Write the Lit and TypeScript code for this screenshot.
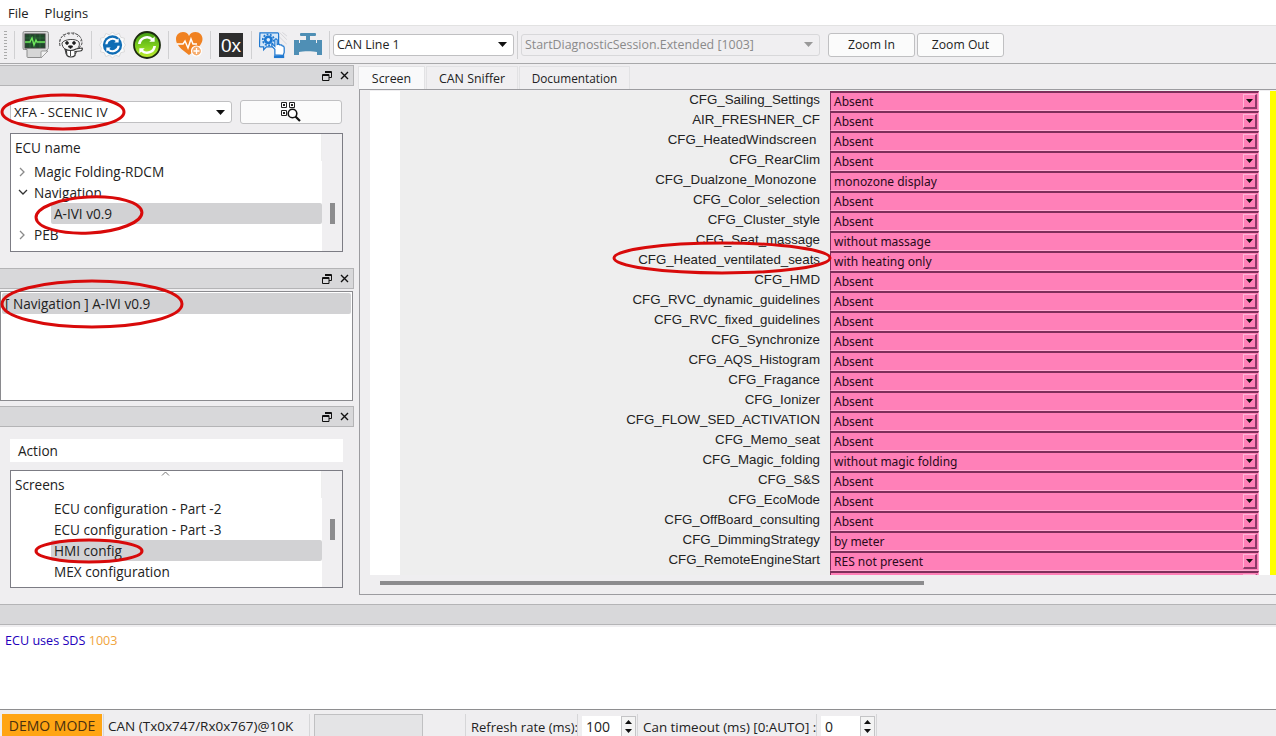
import { LitElement, html, css, svg } from 'lit';
import { customElement } from 'lit/decorators.js';

const rows: [string, string][] = [
  ['CFG_Sailing_Settings', 'Absent'],
  ['AIR_FRESHNER_CF', 'Absent'],
  ['CFG_HeatedWindscreen ', 'Absent'],
  ['CFG_RearClim', 'Absent'],
  ['CFG_Dualzone_Monozone ', 'monozone display'],
  ['CFG_Color_selection', 'Absent'],
  ['CFG_Cluster_style', 'Absent'],
  ['CFG_Seat_massage', 'without massage'],
  ['CFG_Heated_ventilated_seats', 'with heating only'],
  ['CFG_HMD', 'Absent'],
  ['CFG_RVC_dynamic_guidelines', 'Absent'],
  ['CFG_RVC_fixed_guidelines', 'Absent'],
  ['CFG_Synchronize', 'Absent'],
  ['CFG_AQS_Histogram', 'Absent'],
  ['CFG_Fragance', 'Absent'],
  ['CFG_Ionizer', 'Absent'],
  ['CFG_FLOW_SED_ACTIVATION', 'Absent'],
  ['CFG_Memo_seat', 'Absent'],
  ['CFG_Magic_folding', 'without magic folding'],
  ['CFG_S&S', 'Absent'],
  ['CFG_EcoMode', 'Absent'],
  ['CFG_OffBoard_consulting', 'Absent'],
  ['CFG_DimmingStrategy', 'by meter'],
  ['CFG_RemoteEngineStart', 'RES not present'],
  ['', ''],
];

const floatIcon = html`<svg width="10" height="10" viewBox="0 0 10 10"><path d="M3 .5h6.5v6H7M.5 3.5h6.5v6H.5zM.5 4.500h6.500M3 1.500h6.500" fill="none" stroke="#111"/></svg>`;
const closeIcon = html`<svg width="9" height="9" viewBox="0 0 9 9"><path d="M1 1l7 7M8 1l-7 7" stroke="#111" stroke-width="1.4"/></svg>`;
const arrow = html`<svg width="9" height="5" viewBox="0 0 9 5"><path d="M0 0h9L4.5 5z" fill="#111"/></svg>`;
const pinkArrow = html`<svg width="7" height="4" viewBox="0 0 7 4"><path d="M0 0h7L3.5 4z" fill="#111"/></svg>`;
const spinUp = html`<svg width="7" height="4" viewBox="0 0 7 4"><path d="M0 4h7L3.5 0z" fill="#111"/></svg>`;
const spinDown = html`<svg width="7" height="4" viewBox="0 0 7 4"><path d="M0 0h7L3.5 4z" fill="#111"/></svg>`;
const chevRight = html`<svg class="chev" width="7" height="10" viewBox="0 0 7 10"><path d="M1 1l4 4-4 4" fill="none" stroke="#8a8a8a" stroke-width="1.3"/></svg>`;
const chevDown = html`<svg class="chev" width="10" height="7" viewBox="0 0 10 7"><path d="M1 1l4 4 4-4" fill="none" stroke="#333" stroke-width="1.3"/></svg>`;

const syncArrows = svg`<path d="M7 13a7 7 0 0 1 11.500-4.500l-2 2h6v-6l-2 2A10 10 0 0 0 4 13z M21 15a7 7 0 0 1-11.500 4.500l2-2h-6v6l2-2A10 10 0 0 0 24 15z" fill="#fff"/>`;

const icons = {
  monitor: html`<svg width="28" height="28" viewBox="0 0 28 28">
    <path d="M1 2q0-1.500 1.500-1.500h22q2 0 2 2v14q0 1-1 2l-7 8H6q-1 0-1-1v-7H2.500Q1 19 1 17z" fill="#d6d6d6" stroke="#8c8c8c"/>
    <path d="M19 27v-6q0-1 1-1h6z" fill="#f2f2f2" stroke="#8c8c8c" stroke-width=".8"/>
    <rect x="3" y="3" width="20" height="14" fill="#1f4a2a" stroke="#3c3c3c"/>
    <path d="M3 7h20M3 12h20M8 3v14M13 3v14M18 3v14" stroke="#3b7a4a" stroke-width=".5"/>
    <path d="M3 11h5l2-4 2 7 2-5 1 2h8" fill="none" stroke="#6fe85c" stroke-width="1.4"/>
  </svg>`,
  beaver: html`<svg width="27" height="28" viewBox="0 0 27 28" fill="none" stroke="#333" stroke-width=".9">
    <path d="M3 15C1 7 7 2 14 2s11 4 11 10c0 2-2 3-3 5" stroke-dasharray="3 1"/>
    <path d="M6 3l2 3M11 1l1 3M17 1l-1 3M22 4l-2 2M25 9l-2 1M2 9l2 1" stroke="#777"/>
    <path d="M5 12c2-4 14-5 17-1 1 3 0 5-2 7l-1 4c-2 4-8 5-10 1l-1-5c-2-1-3-4-3-6z" fill="#f4f4f4"/>
    <circle cx="10" cy="12" r="1.400" fill="#111"/><circle cx="17" cy="12" r="1.400" fill="#111"/>
    <path d="M11 15.500c1-1 4-1 5 0l-2.500 2z" fill="#111"/>
    <path d="M8 18c3 2 8 2 11 0l6-1c1 1 0 3-2 3l-5 .5v4c-2 2-6 2-8 0l-.5-4z" fill="#fff" stroke-width="1.100"/>
    <path d="M13.500 19v6"/>
  </svg>`,
  blueSync: html`<svg width="27" height="28" viewBox="0 0 28 28">
    <path d="M14 .5l3 3 4-1.500 1.500 4 4 1-1 4 2 3-2 3 1 4-4 1-1.500 4-4-1.500-3 3-3-3-4 1.500-1.500-4-4-1 1-4-2-3 2-3-1-4 4-1L7 2l4 1.500z" fill="#fbfbfb" stroke="#d8d8d8"/>
    <circle cx="14" cy="14" r="10" fill="#0f6db5"/>
    <g transform="translate(3.500 3.500) scale(.75)">${syncArrows}</g>
  </svg>`,
  greenSync: html`<svg width="28" height="28" viewBox="0 0 28 28">
    <defs><linearGradient id="gr" x1="0" y1="0" x2="0" y2="1"><stop offset="0" stop-color="#3f9a14"/><stop offset=".55" stop-color="#7fcf1e"/><stop offset="1" stop-color="#c4ee32"/></linearGradient></defs>
    <circle cx="14" cy="14" r="13" fill="url(#gr)" stroke="#1c2a10" stroke-width="1.800"/>
    <g transform="translate(1.400 1.400) scale(.9)">${syncArrows}</g>
  </svg>`,
  heart: html`<svg width="27" height="28" viewBox="0 0 27 28">
    <path d="M13 24C5 18 0 14 0 8c0-4 3-7 7-7 3 0 5 1.500 6 4 1-2.500 3.500-4 6.500-4 4 0 7 3 7 7 0 5-5 10-13.500 16z" fill="#f08222"/>
    <path d="M1 13h6l2-3 3 7 3-9 2 5h4" fill="none" stroke="#fff" stroke-width="1.500"/>
    <circle cx="20.500" cy="20" r="5" fill="#f5ab6c" stroke="#fff" stroke-width="1.200"/>
    <path d="M20.500 17v6M17.500 20h6" stroke="#fff" stroke-width="1.300"/>
  </svg>`,
  gearHand: html`<svg width="28" height="28" viewBox="0 0 30 29">
    <path d="M17 1L30 14M22 1l8 8M12 14l9-9M25 1l5 4" stroke="#d4d4d8" stroke-width="1"/>
    <path d="M1 1.500h19q1 0 1 1v13q0 1-1 1H8l-3 3v-3H1.500q-1 0-1-1z" fill="#d5e7f8" stroke="#1f78d0" stroke-width="1.300"/>
    <circle cx="10" cy="9" r="4.800" fill="#1f78d0"/>
    <circle cx="10" cy="9" r="5.900" fill="none" stroke="#1f78d0" stroke-width="1.900" stroke-dasharray="2 1.600"/>
    <circle cx="10" cy="9" r="1.900" fill="#e4f0fb"/>
    <path d="M17 25v-6l-3-3q-1-2 1-2l2 2V9q1-2 2.500 0v5q2-1 3 .5 2-.5 2.500 1 2 0 2 2v5l-1 3z" fill="#fff" stroke="#1f78d0" stroke-width="1.300"/>
    <rect x="16" y="25.500" width="11" height="3" fill="#1f78d0"/>
  </svg>`,
  valve: html`<svg width="28" height="23" viewBox="0 0 28 23" fill="#4f8fb5">
    <rect x="6" y="0" width="16" height="3" rx="1"/>
    <rect x="12" y="2" width="4" height="6"/>
    <path d="M6 7h16v3h1V7h5v15h-5v-3c-4-1-14-1-18 0v3H0V7h5v3h1z"/>
  </svg>`,
  qr: html`<svg width="20" height="20" viewBox="0 0 20 20">
    <path d="M.5.500h5v5h-5zM8.500.500h5v5h-5zM.5 8.500h5v5h-5z" fill="none" stroke="#222"/>
    <path d="M2 2h2v2H2zM10 2h2v2h-2zM2 10h2v2H2z" fill="#222"/>
    <circle cx="11.500" cy="11.500" r="4.300" fill="#fff" stroke="#111" stroke-width="1.600"/>
    <path d="M14.500 14.500l4.500 4.500" stroke="#111" stroke-width="2.200"/>
  </svg>`,
};

const spin = (value: string) =>
  html`<div class="spin"><span>${value}</span><div class="spin-btns"><i>${spinUp}</i><i>${spinDown}</i></div></div>`;

@customElement('app-root')
export class AppRoot extends LitElement {
  static styles = css`
    :host {
      display: block;
      position: relative;
      width: 1276px;
      height: 736px;
      overflow: hidden;
      background: #efeef0;
      color: #222;
      font: 13px 'Open Sans', 'Noto Sans', sans-serif;
    }

    .menubar {
      display: flex;
      gap: 16px;
      height: 25px;
      padding-left: 8px;
      align-items: center;
      background: #fff;
      border-bottom: 1px solid #e2e2e2;
    }

    .toolbar {
      display: flex;
      align-items: center;
      gap: 7px;
      height: 38px;
      padding-left: 4px;
      box-sizing: border-box;
      background: #f0eff1;
      border-bottom: 1px solid #a8a8aa;
    }

    .grip {
      width: 3px;
      height: 28px;
      background: repeating-linear-gradient(#aaa 0 1px, transparent 1px 3px);
    }

    .sep {
      width: 1px;
      height: 28px;
      background: #d0d0d2;
    }

    .tb-icon {
      display: flex;
    }

    .hex {
      width: 24px;
      height: 24px;
      margin: 0 1px;
      background: #2e2e2e;
      color: #fff;
      display: flex;
      align-items: flex-end;
      justify-content: center;
      font: 19px/22px 'Liberation Sans', sans-serif;
    }

    .tb-combos {
      display: flex;
      align-items: center;
      gap: 3px;
      margin-left: -4px;
      font-size: 12.4px;
    }

    .combo {
      display: flex;
      align-items: center;
      justify-content: space-between;
      box-sizing: border-box;
      height: 22px;
      padding: 0 6px 0 3px;
      background: #fff;
      border: 1px solid #c0c0c2;
      border-radius: 3px;
      white-space: nowrap;
    }

    .combo.can {
      width: 181px;
    }

    .combo.session {
      width: 299px;
      background: #f0eff1;
      color: #8a8a8a;
      border-color: #d8d8da;
    }

    .btn {
      box-sizing: border-box;
      display: flex;
      align-items: center;
      justify-content: center;
      background: #fbfbfb;
      border: 1px solid #c0c0c2;
      border-radius: 3px;
    }

    .zooms {
      display: flex;
      gap: 2px;
      margin-left: 1px;
      font-size: 12.2px;
    }

    .zooms .btn {
      width: 87px;
      height: 24px;
    }

    .main {
      display: flex;
      height: 540px;
    }

    .left {
      width: 359px;
      flex: none;
      box-sizing: border-box;
      padding-top: 1px;
      font-size: 13.6px;
    }

    .dock-title {
      display: flex;
      align-items: center;
      justify-content: flex-end;
      gap: 8px;
      box-sizing: border-box;
      width: 354px;
      height: 21px;
      padding-right: 4px;
      background: #d8d8da;
      border: 1px solid #b4b4b6;
      border-left: 0;
    }

    .dock-title.second {
      margin-top: 16px;
    }

    .dock-title.full {
      width: 100%;
      border-right: 0;
    }

    .picker {
      display: flex;
      align-items: center;
      gap: 8px;
      padding: 14px 0 0 10px;
      font-size: 13.2px;
    }

    .picker .combo {
      width: 222px;
    }

    .picker .btn {
      width: 102px;
      height: 24px;
    }

    .tree {
      display: flex;
      box-sizing: border-box;
      width: 333px;
      margin-left: 10px;
      background: #fff;
      border: 1px solid #7c7c84;
      overflow: hidden;
      position: relative;
    }

    .tree.ecu {
      height: 119px;
      margin-top: 9px;
    }

    .tree.screens {
      height: 118px;
      margin-top: 8px;
    }

    .tree-body {
      width: 311px;
      flex: none;
    }

    .tree-head {
      display: flex;
      align-items: center;
      height: 27px;
      padding-left: 4px;
      border-right: 1px solid #eee;
    }

    .row {
      display: flex;
      align-items: center;
      height: 21px;
      white-space: nowrap;
    }

    .row .twist {
      width: 23px;
      flex: none;
      display: flex;
      justify-content: center;
    }

    .row.child {
      margin-left: 40px;
      padding-left: 3px;
    }

    .row.sel {
      background: #d2d2d4;
      border-radius: 2px;
    }

    .tree-bar {
      flex: 1;
      background: #f0eff1;
    }

    .thumb {
      width: 5px;
      height: 21px;
      margin-left: 8px;
      background: #8c8c8e;
    }

    .ecu .thumb {
      margin-top: 69px;
    }

    .screens .thumb {
      margin-top: 48px;
    }

    .up-chev {
      position: absolute;
      left: 150px;
      top: 0;
    }

    .log-list {
      box-sizing: border-box;
      width: 353px;
      height: 110px;
      margin-top: 2px;
      margin-bottom: 5px;
      padding: 1px;
      background: #fff;
      border: 1px solid #8a8a8e;
    }

    .log-list div {
      height: 21px;
      line-height: 21px;
      padding-left: 3px;
      background: #d2d2d4;
      border-radius: 2px;
    }

    .action {
      display: flex;
      align-items: center;
      box-sizing: border-box;
      width: 333px;
      height: 23px;
      margin: 12px 0 0 10px;
      padding-left: 8px;
      background: #fff;
    }

    .right {
      flex: 1;
      min-width: 0;
      padding-top: 2px;
    }

    .tabs {
      display: flex;
      height: 23px;
      margin-left: -1px;
      font-size: 12.4px;
    }

    .tab {
      display: flex;
      align-items: center;
      justify-content: center;
      box-sizing: border-box;
      background: #f0eff1;
      border: 1px solid #e2e2e4;
      border-bottom: 0;
      margin-right: 1px;
    }

    .tab.on {
      width: 67px;
      background: #f9f9fa;
    }

    .tab.sniffer {
      width: 92px;
    }

    .tab.docs {
      width: 111px;
      font-size: 11.8px;
    }

    .frame {
      height: 506px;
      box-sizing: border-box;
      border-top: 1px solid #9c9ca0;
      border-left: 1px solid #9c9ca0;
      border-bottom: 1px solid #9c9ca0;
      padding-left: 10px;
    }

    .canvas {
      display: flex;
      height: 484px;
      margin-top: 1px;
      overflow: hidden;
    }

    .gutter {
      width: 30px;
      flex: none;
      background: #fff;
    }

    .form {
      width: 859px;
      flex: none;
      background: #eeeeee;
    }

    .form-row {
      display: flex;
      height: 20px;
    }

    .form-row label {
      width: 430px;
      flex: none;
      padding: 1px 10px 0 0;
      box-sizing: border-box;
      text-align: right;
      white-space: pre;
      font: 13.3px/16px 'Liberation Sans', sans-serif;
      color: #222;
    }

    .pink {
      display: flex;
      align-items: center;
      justify-content: space-between;
      box-sizing: border-box;
      width: 429px;
      height: 20px;
      padding-left: 3px;
      background: #ff80b8;
      border-style: solid;
      border-width: 2px 1px 1px 1px;
      border-color: #7d2f5a #ffa8d0 #ffa8d0 #7d2f5a;
      font: 12px 'Noto Sans', sans-serif;
      color: #2a0a1a;
    }

    .drop {
      display: flex;
      align-items: center;
      justify-content: center;
      box-sizing: border-box;
      width: 14px;
      height: 15px;
      margin-right: 1px;
      border-style: solid;
      border-width: 1px 2px 2px 1px;
      border-color: #ffb4d6 #8d3a68 #8d3a68 #ffb4d6;
    }

    .margin-white {
      width: 11px;
      flex: none;
      background: #fff;
    }

    .yellow {
      flex: 1;
      background: #ffff00;
    }

    .hscroll {
      width: 544px;
      height: 4px;
      margin: 6px 0 0 10px;
      background: #8c8c8e;
    }

    .log {
      box-sizing: border-box;
      height: 82px;
      margin-top: 2px;
      padding: 5px 5px;
      background: #fff;
      font-size: 12.6px;
      color: #2200bb;
    }

    .log b {
      font-weight: 400;
      color: #f0a43c;
    }

    .status {
      display: flex;
      align-items: flex-end;
      height: 28px;
      box-sizing: border-box;
      border-top: 1px solid #8e8e90;
      padding-left: 2px;
    }

    .demo {
      display: flex;
      align-items: center;
      justify-content: center;
      width: 100px;
      height: 23px;
      background: #ffa514;
      color: #4a3010;
      font-size: 14px;
    }

    .cell {
      display: flex;
      align-items: center;
      height: 23px;
      box-sizing: border-box;
      border-left: 1px solid #d6d6d8;
      padding-left: 5px;
      white-space: nowrap;
    }

    .cell.can {
      width: 206px;
      margin-left: 1px;
      padding-left: 4px;
      font-size: 13.5px;
    }

    .cell.blank {
      width: 156px;
      padding-left: 4px;
    }

    .blank div {
      width: 109px;
      height: 23px;
      box-sizing: border-box;
      background: #e4e4e6;
      border: 1px solid #c0c0c2;
      border-bottom: 0;
    }

    .cell.rate {
      width: 112px;
      padding-top: 2px;
    }

    .cell.value {
      width: 60px;
      padding-left: 4px;
    }

    .cell.timeout {
      width: 179px;
      padding-top: 2px;
      font-size: 13.4px;
    }

    .spin {
      display: flex;
      align-items: center;
      box-sizing: border-box;
      width: 54px;
      height: 21px;
      margin-top: 2px;
      padding-left: 4px;
      background: #fff;
      font-size: 14px;
    }

    .spin span {
      flex: 1;
    }

    .spin-btns {
      display: flex;
      flex-direction: column;
      width: 15px;
      height: 21px;
      border: 1px solid #c4c4c6;
      box-sizing: border-box;
      background: #f4f4f4;
    }

    .spin-btns i {
      flex: 1;
      display: flex;
      align-items: center;
      justify-content: center;
    }

    .ovals {
      position: absolute;
      left: 0;
      top: 0;
      pointer-events: none;
    }
  `;

  render() {
    return html`
      <div class="menubar"><span>File</span><span>Plugins</span></div>
      <div class="toolbar">
        <div class="grip"></div>
        <div class="sep"></div>
        <div class="tb-icon">${icons.monitor}</div>
        <div class="tb-icon">${icons.beaver}</div>
        <div class="sep"></div>
        <div class="tb-icon">${icons.blueSync}</div>
        <div class="tb-icon">${icons.greenSync}</div>
        <div class="sep"></div>
        <div class="tb-icon">${icons.heart}</div>
        <div class="sep"></div>
        <div class="hex">0x</div>
        <div class="sep"></div>
        <div class="tb-icon">${icons.gearHand}</div>
        <div class="tb-icon">${icons.valve}</div>
        <div class="sep"></div>
        <div class="tb-combos">
          <div class="combo can"><span>CAN Line 1</span>${arrow}</div>
          <div class="sep"></div>
          <div class="combo session">
            <span>StartDiagnosticSession.Extended [1003]</span>
            <svg width="9" height="5" viewBox="0 0 9 5"><path d="M0 0h9L4.500 5z" fill="#999"/></svg>
          </div>
        </div>
        <div class="zooms">
          <div class="btn">Zoom In</div>
          <div class="btn">Zoom Out</div>
        </div>
      </div>

      <div class="main">
        <div class="left">
          <div class="dock-title">${floatIcon}${closeIcon}</div>
          <div class="picker">
            <div class="combo"><span>XFA - SCENIC IV</span>${arrow}</div>
            <div class="btn">${icons.qr}</div>
          </div>
          <div class="tree ecu">
            <div class="tree-body">
              <div class="tree-head">ECU name</div>
              <div class="row"><div class="twist">${chevRight}</div><span>Magic Folding-RDCM</span></div>
              <div class="row"><div class="twist">${chevDown}</div><span>Navigation</span></div>
              <div class="row child sel"><span>A-IVI v0.9</span></div>
              <div class="row"><div class="twist">${chevRight}</div><span>PEB</span></div>
              <div class="row"><div class="twist">${chevRight}</div><span>Powertrain</span></div>
            </div>
            <div class="tree-bar"><div class="thumb"></div></div>
          </div>

          <div class="dock-title second">${floatIcon}${closeIcon}</div>
          <div class="log-list"><div>[ Navigation ] A-IVI v0.9</div></div>

          <div class="dock-title">${floatIcon}${closeIcon}</div>
          <div class="action">Action</div>
          <div class="tree screens">
            <div class="tree-body">
              <div class="tree-head">Screens</div>
              <div class="row child"><span>ECU configuration - Part -2</span></div>
              <div class="row child"><span>ECU configuration - Part -3</span></div>
              <div class="row child sel"><span>HMI config</span></div>
              <div class="row child"><span>MEX configuration</span></div>
            </div>
            <div class="tree-bar"><div class="thumb"></div></div>
            <svg class="up-chev" width="9" height="5" viewBox="0 0 9 5"><path d="M1 4.500l3.500-3.500 3.500 3.500" fill="none" stroke="#777"/></svg>
          </div>
        </div>

        <div class="right">
          <div class="tabs">
            <div class="tab on">Screen</div>
            <div class="tab sniffer">CAN Sniffer</div>
            <div class="tab docs">Documentation</div>
          </div>
          <div class="frame">
            <div class="canvas">
              <div class="gutter"></div>
              <div class="form">
                ${rows.map(
                  ([label, value]) => html`
                    <div class="form-row">
                      <label>${label}</label>
                      <div class="pink"><span>${value}</span><div class="drop">${pinkArrow}</div></div>
                    </div>
                  `,
                )}
              </div>
              <div class="margin-white"></div>
              <div class="yellow"></div>
            </div>
            <div class="hscroll"></div>
          </div>
        </div>
      </div>

      <div class="dock-title full"></div>
      <div class="log">ECU uses SDS <b>1003</b></div>
      <div class="status">
        <div class="demo">DEMO MODE</div>
        <div class="cell can">CAN (Tx0x747/Rx0x767)@10K</div>
        <div class="cell blank"><div></div></div>
        <div class="cell rate">Refresh rate (ms):</div>
        <div class="cell value">${spin('100')}</div>
        <div class="cell timeout">Can timeout (ms) [0:AUTO] :</div>
        <div class="cell value">${spin('0')}</div>
        <div class="cell"></div>
      </div>

      <svg class="ovals" width="1276" height="736" fill="none" stroke="#d80a0a" stroke-width="3">
        <ellipse cx="63" cy="112" rx="61" ry="17"></ellipse>
        <ellipse cx="89" cy="215" rx="53" ry="18" transform="rotate(-3 89 215)"></ellipse>
        <ellipse cx="92" cy="304" rx="90" ry="23"></ellipse>
        <ellipse cx="89" cy="551" rx="53" ry="11"></ellipse>
        <ellipse cx="722" cy="258" rx="108" ry="15"></ellipse>
      </svg>
    `;
  }
}
